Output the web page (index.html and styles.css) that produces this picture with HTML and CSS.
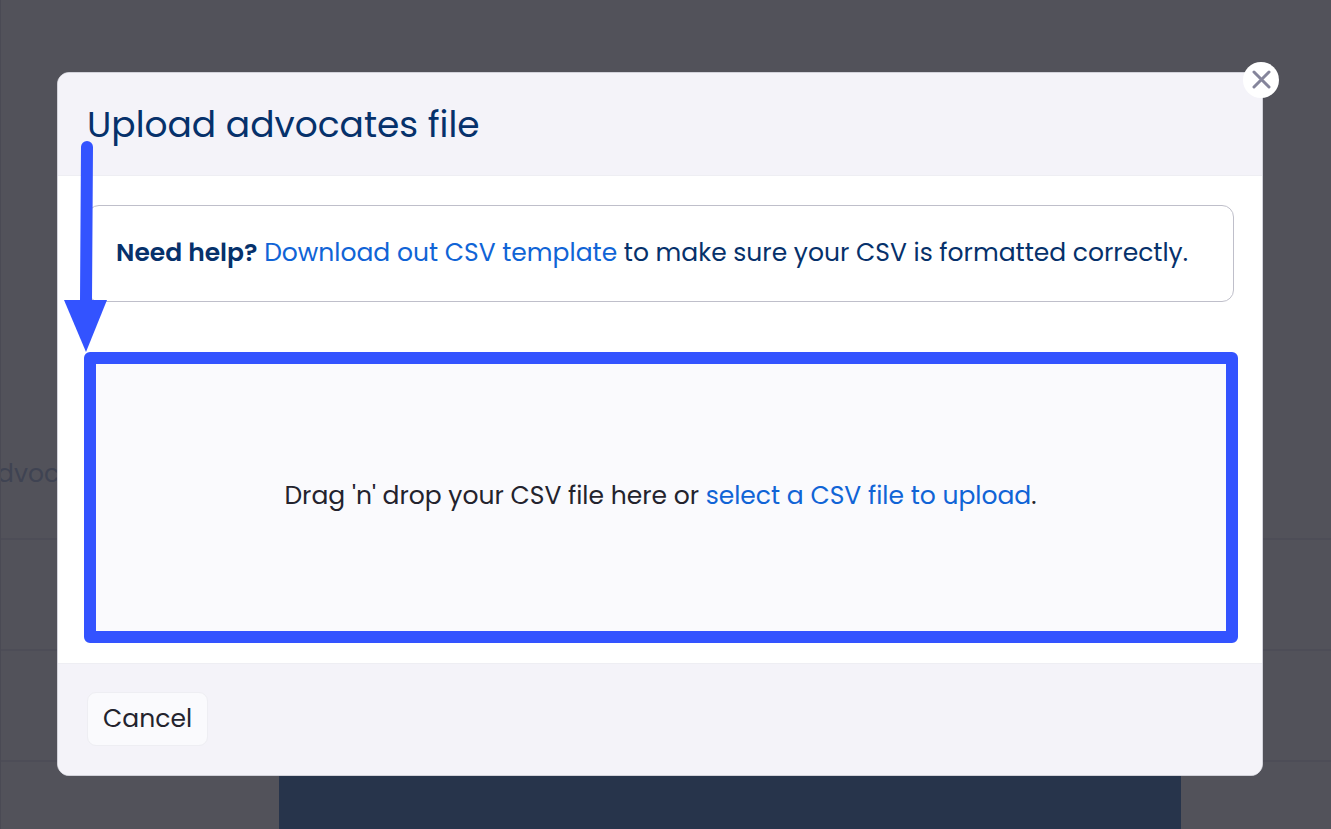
FILE: index.html
```html
<!DOCTYPE html>
<html lang="en">
<head>
  <meta charset="UTF-8">
  <meta name="viewport" content="width=device-width, initial-scale=1">

  <title>Upload advocates file</title>

  <link rel="stylesheet" href="styles.css">
</head>
<body>

  <!-- page behind the modal -->
  <div class="page" aria-hidden="true">
    <div class="page-row page-row-head"><span class="page-label">dvoc</span></div>
    <div class="page-row"></div>
    <div class="page-row"></div>
    <div class="page-banner"></div>
  </div>

  <div class="overlay">
    <section class="modal" role="dialog" aria-modal="true" aria-labelledby="modal-title">
      <button class="modal-close" type="button" aria-label="Close">
        <svg width="20" height="20" viewBox="0 0 20 20" fill="none" stroke="#85859b" stroke-width="3" stroke-linecap="round">
          <path d="M3 2l15 15M18 2L3 17"/>
        </svg>
      </button>

      <header class="modal-header">
        <h1 class="modal-title" id="modal-title">Upload advocates file</h1>
      </header>

      <div class="modal-body">
        <p class="help"><strong>Need help?</strong> <a href="#">Download out CSV template</a> to make sure your CSV is formatted correctly.</p>

        <div class="dropzone">
          <p>Drag 'n' drop your CSV file here or <a href="#">select a CSV file to upload</a>.</p>
          <div class="highlight"></div>
          <svg class="arrow" width="44" height="214" viewBox="0 0 44 214" fill="#3353ff">
            <path d="M17 9a6 6 0 0 1 12 0L28 162H16z"/>
            <path d="M0 162h43L22 214z"/>
          </svg>
        </div>
      </div>

      <footer class="modal-footer">
        <button class="btn" type="button">Cancel</button>
      </footer>
    </section>
  </div>

</body>
</html>
```
FILE: styles.css
```css
* {
  padding: 0;
  margin: 0;
  box-sizing: border-box;
}

body {
  height: 100vh;
  overflow: hidden;
  background-color: #fff;
  color: #23232d;
  font-family: Poppins, Inter, sans-serif;
  font-size: 25px;
  line-height: 36px;
}

a {
  color: #1064d6;
  text-decoration: none;
}

/* page behind */
.page {
  height: 100vh;
  padding-top: 428px;
  border-left: 1px solid #d8d8e0;
  overflow: hidden;
}

.page-row {
  height: 111px;
  border-bottom: 2px solid #e6e6ee;
}

.page-row-head {
  padding-top: 28px;
  height: 112px;
}

.page-label {
  margin-left: -4px;
  color: #a0b4d8;
}

.page-banner {
  height: 100px;
  margin: 0 150px 0 278px;
  background: #2869b4;
}

/* modal */
.overlay {
  position: fixed;
  inset: 0;
  padding: 72px 68px 53px 57px;
  background: rgba(39, 39, 49, .8);
}

.modal {
  position: relative;
  border: 1px solid #d2d2da;
  border-radius: 12px;
  background: #fff;
}

.modal-close {
  position: absolute;
  top: -11px;
  right: -17px;
  width: 36px;
  height: 36px;
  display: flex;
  align-items: center;
  justify-content: center;
  border: 0;
  border-radius: 50%;
  background: #fff;
  cursor: pointer;
}

.modal-header {
  padding: 28px 29px 26px;
  border-bottom: 1px solid #eeeef3;
  border-radius: 11px 11px 0 0;
  background: #f4f3f9;
}

.modal-title {
  color: #06316b;
  font-size: 36px;
  font-weight: 400;
  line-height: 48px;
}

.modal-body {
  padding: 29px 28px 30px 29px;
}

.help {
  padding: 29px 28px 30px;
  margin-bottom: 56px;
  border: 1px solid #bfbfca;
  border-radius: 12px;
  color: #06316b;
}

.help strong {
  font-weight: 600;
}

.dropzone {
  position: relative;
  height: 275px;
  display: flex;
  align-items: center;
  justify-content: center;
  border: 2px dashed #d8d8e2;
  background: #fafafd;
}

.highlight {
  position: absolute;
  inset: -8px -6px -12px -5px;
  border: 12px solid #3353ff;
  border-radius: 6px;
  pointer-events: none;
}

.arrow {
  position: absolute;
  top: -222px;
  left: -25px;
  pointer-events: none;
}

.modal-footer {
  padding: 28px 29px 29px;
  border-top: 1px solid #eeeef3;
  border-radius: 0 0 11px 11px;
  background: #f4f3f9;
}

.btn {
  display: block;
  padding: 8px 15px;
  border: 1px solid #eeeef3;
  border-radius: 9px;
  background: #fafafd;
  color: inherit;
  font: inherit;
  cursor: pointer;
}
```
